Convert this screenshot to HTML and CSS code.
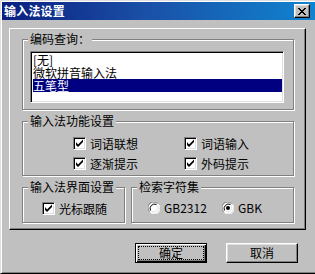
FILE: index.html
```html
<!DOCTYPE html>
<html lang="zh">
<head>
<meta charset="utf-8">
<title>输入法设置</title>
<link rel="stylesheet" href="styles.css">
</head>
<body>
<div class="window">
  <div class="titlebar">
    <span class="title">输入法设置</span>
    <span class="close-btn">
      <svg width="8" height="7" viewBox="0 0 8 7"><path d="M0 0h2v1h1v1h2v-1h1v-1h2v1h-1v1h-1v1h-1v1h1v1h1v1h1v1h-2v-1h-1v-1h-2v1h-1v1h-2v-1h1v-1h1v-1h1v-1h-1v-1h-1v-1h-1z" fill="#000"/></svg>
    </span>
  </div>
  <div class="panel">
    <div class="group group-code">
      <span class="group-title">编码查询：</span>
      <div class="listbox">
        <div class="item">[无]</div>
        <div class="item">微软拼音输入法</div>
        <div class="item selected">五笔型</div>
      </div>
    </div>
    <div class="group group-func">
      <span class="group-title">输入法功能设置</span>
      <div class="check-grid">
        <label class="check"><span class="box"><svg width="9" height="9" viewBox="0 0 9 9"><path d="M1 3v3l2 2l5-5v-2.5l-5 5z" fill="#000"/></svg></span>词语联想</label>
        <label class="check"><span class="box"><svg width="9" height="9" viewBox="0 0 9 9"><path d="M1 3v3l2 2l5-5v-2.5l-5 5z" fill="#000"/></svg></span>词语输入</label>
        <label class="check"><span class="box"><svg width="9" height="9" viewBox="0 0 9 9"><path d="M1 3v3l2 2l5-5v-2.5l-5 5z" fill="#000"/></svg></span>逐渐提示</label>
        <label class="check"><span class="box"><svg width="9" height="9" viewBox="0 0 9 9"><path d="M1 3v3l2 2l5-5v-2.5l-5 5z" fill="#000"/></svg></span>外码提示</label>
      </div>
    </div>
    <div class="row-groups">
      <div class="group group-ui">
        <span class="group-title">输入法界面设置</span>
        <label class="check"><span class="box"><svg width="9" height="9" viewBox="0 0 9 9"><path d="M1 3v3l2 2l5-5v-2.5l-5 5z" fill="#000"/></svg></span>光标跟随</label>
      </div>
      <div class="group group-charset">
        <span class="group-title">检索字符集</span>
        <div class="radios">
          <label class="radio r1"><svg class="rb" width="12" height="12" viewBox="0 0 12 12"><circle cx="6" cy="6" r="5.5" fill="#fff"/><path d="M1.5 9.5A5.5 5.5 0 0 1 9.5 1.5" stroke="#808080" fill="none"/><path d="M2.5 8.5A4.5 4.5 0 0 1 8.5 2.5" stroke="#000" fill="none"/><path d="M10.5 2.5A5.5 5.5 0 0 1 2.5 10.5" stroke="#fff" fill="none"/><path d="M9.5 3.5A4.5 4.5 0 0 1 3.5 9.5" stroke="#dfdfdf" fill="none"/></svg>GB2312</label>
          <label class="radio"><svg class="rb" width="12" height="12" viewBox="0 0 12 12"><circle cx="6" cy="6" r="5.5" fill="#fff"/><path d="M1.5 9.5A5.5 5.5 0 0 1 9.5 1.5" stroke="#808080" fill="none"/><path d="M2.5 8.5A4.5 4.5 0 0 1 8.5 2.5" stroke="#000" fill="none"/><path d="M10.5 2.5A5.5 5.5 0 0 1 2.5 10.5" stroke="#fff" fill="none"/><path d="M9.5 3.5A4.5 4.5 0 0 1 3.5 9.5" stroke="#dfdfdf" fill="none"/><circle cx="6" cy="6" r="2" fill="#000"/></svg>GBK</label>
        </div>
      </div>
    </div>
  </div>
  <div class="buttons">
    <button class="btn default"><span class="focus">确定</span></button>
    <button class="btn">取消</button>
  </div>
</div>
</body>
</html>
```
FILE: styles.css
```css
html, body {
  margin: 0;
  padding: 0;
}
body {
  width: 315px;
  height: 274px;
  overflow: hidden;
  background: #c0c0c0;
  font-family: "Noto Sans CJK SC", "Noto Sans", sans-serif;
  font-size: 12px;
  color: #000;
}
.window {
  width: 318px;
  height: 274px;
  box-sizing: border-box;
  border: 1px solid;
  border-color: #dfdfdf #000 #000 #dfdfdf;
  box-shadow: inset 1px 1px 0 #fff, inset -1px -1px 0 #808080;
  padding: 1px;
  background: #c0c0c0;
  display: flex;
  flex-direction: column;
}
.titlebar {
  height: 18px;
  flex: none;
  background: linear-gradient(to right, #0a1f80 0%, #1a4fa6 45%, #1084d0 100%);
  display: flex;
  align-items: center;
  justify-content: space-between;
  padding: 0 6px 0 2px;
  color: #fff;
}
.title {
  font-weight: bold;
  font-size: 12px;
  line-height: 14px;
  letter-spacing: 0.2px;
}
.close-btn {
  width: 16px;
  height: 14px;
  box-sizing: border-box;
  background: #c0c0c0;
  border: 1px solid;
  border-color: #fff #000 #000 #fff;
  box-shadow: inset -1px -1px 0 #808080, inset 1px 1px 0 #dfdfdf;
  display: flex;
  align-items: center;
  justify-content: center;
}
.close-btn svg { display: block; }
.panel {
  margin: 8px 0 0 7px;
  width: 297px;
  height: 202px;
  box-sizing: border-box;
  border: 1px solid;
  border-color: #fff #000 #000 #fff;
  box-shadow: inset -1px -1px 0 #808080;
  padding: 10px 0 0 12px;
  display: flex;
  flex-direction: column;
}
.group {
  position: relative;
  box-sizing: border-box;
  border: 1px solid #808080;
  box-shadow: inset 1px 1px 0 #fff, 1px 1px 0 #fff;
}
.group-title {
  position: absolute;
  top: -8px;
  left: 5px;
  padding: 0 2px;
  background: #c0c0c0;
  line-height: 14px;
  white-space: nowrap;
}
.group-code {
  width: 272px;
  height: 71px;
  padding: 11px 0 0 7px;
}
.listbox {
  width: 254px;
  height: 52px;
  box-sizing: border-box;
  background: #fff;
  border: 1px solid;
  border-color: #808080 #fff #fff #808080;
  box-shadow: inset 1px 1px 0 #000, inset -1px -1px 0 #dfdfdf;
  padding: 1px 1px 1px 2px;
}
.item {
  height: 13px;
  line-height: 13px;
  white-space: nowrap;
}
.item.selected {
  background: #000080;
  color: #fff;
}
.group-func {
  margin-top: 11px;
  width: 272px;
  height: 55px;
  padding: 15px 0 0 50px;
}
.check-grid {
  display: grid;
  grid-template-columns: 111px 100px;
  row-gap: 7px;
}
.check {
  display: flex;
  align-items: center;
  height: 13px;
  line-height: 13px;
  white-space: nowrap;
}
.box {
  width: 13px;
  height: 13px;
  box-sizing: border-box;
  flex: none;
  background: #fff;
  border: 1px solid;
  border-color: #808080 #fff #fff #808080;
  box-shadow: inset 1px 1px 0 #000, inset -1px -1px 0 #dfdfdf;
  display: flex;
  align-items: center;
  justify-content: center;
  margin-right: 4px;
}
.box svg { display: block; }
.row-groups {
  margin-top: 11px;
  display: flex;
  gap: 6px;
}
.group-ui {
  width: 103px;
  height: 36px;
  padding: 14px 0 0 19px;
}
.group-charset {
  width: 163px;
  height: 36px;
  padding: 13px 0 0 16px;
}
.radios {
  display: flex;
}
.radio {
  display: flex;
  align-items: center;
  height: 14px;
  line-height: 14px;
  white-space: nowrap;
}
.radio.r1 {
  width: 74px;
}
.rb {
  display: block;
  flex: none;
  margin-right: 4px;
}
.buttons {
  margin-top: 13px;
  padding-left: 133px;
  display: flex;
  gap: 19px;
}
.btn {
  width: 72px;
  height: 20px;
  box-sizing: border-box;
  margin: 0;
  padding: 0;
  background: #c0c0c0;
  font-family: "Noto Sans CJK SC", "Noto Sans", sans-serif;
  font-size: 12px;
  color: #000;
  border: 1px solid;
  border-color: #fff #000 #000 #fff;
  box-shadow: inset -1px -1px 0 #808080, inset 1px 1px 0 #dfdfdf;
  display: flex;
  align-items: center;
  justify-content: center;
  line-height: 14px;
}
.btn.default {
  border: 1px solid #000;
  box-shadow: inset 1px 1px 0 #fff, inset -1px -1px 0 #000, inset -2px -2px 0 #808080;
  padding: 2px;
}
.focus {
  display: flex;
  align-items: center;
  justify-content: center;
  width: 100%;
  height: 100%;
  box-sizing: border-box;
  outline: 1px dotted #000;
  outline-offset: -1px;
}
```
